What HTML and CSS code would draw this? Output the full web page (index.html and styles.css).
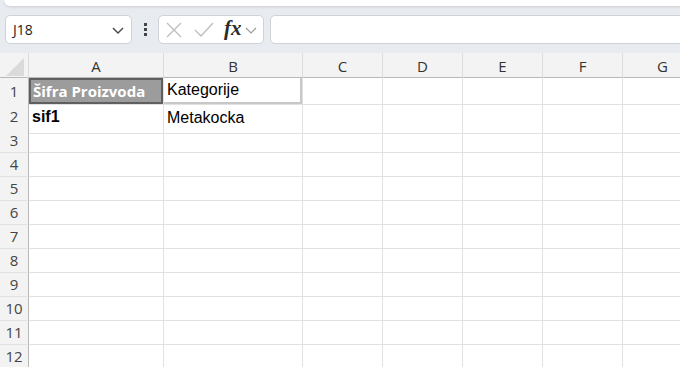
FILE: index.html
```html
<!DOCTYPE html>
<html lang="hr">
<head>
  <meta charset="UTF-8">
  <title>Radna knjiga</title>
  <link rel="stylesheet" href="styles.css">
</head>
<body>

<div class="ribbon-edge"></div>

<!-- traka s formulom -->
<div class="formula-row">
  <div class="name-box">
    <span>J18</span>
    <svg width="14" height="10" viewBox="0 0 14 10"><path d="M2 3 L7 8 L12 3" fill="none" stroke="#444" stroke-width="1.4"/></svg>
  </div>
  <div class="dots"><i></i><i></i><i></i></div>
  <div class="fx-box">
    <svg width="18" height="18" viewBox="0 0 18 18"><path d="M2 2 L16 16 M16 2 L2 16" stroke="#bdbdbd" stroke-width="1.3"/></svg>
    <svg width="22" height="18" viewBox="0 0 22 18"><path d="M2 9 L8 15 L20 2" fill="none" stroke="#bdbdbd" stroke-width="1.3"/></svg>
    <span class="fx">fx</span>
    <svg width="12" height="8" viewBox="0 0 12 8"><path d="M1 2 L6 7 L11 2" fill="none" stroke="#999" stroke-width="1.1"/></svg>
  </div>
  <div class="formula-input"></div>
</div>

<!-- tablica -->
<div class="sheet">
  <div class="row head">
    <div class="corner"><span></span></div>
    <div class="col">A</div><div class="col">B</div><div class="col">C</div><div class="col">D</div>
    <div class="col">E</div><div class="col">F</div><div class="col">G</div><div class="col"></div>
  </div>
  <div class="row r1">
    <div class="num">1</div>
    <div class="cell"><div class="title-cell">Šifra Proizvoda</div></div>
    <div class="cell"><div class="cat-cell">Kategorije</div></div>
    <div class="cell"></div><div class="cell"></div><div class="cell"></div><div class="cell"></div><div class="cell"></div><div class="cell"></div>
  </div>
  <div class="row r2">
    <div class="num">2</div>
    <div class="cell bold">sif1</div>
    <div class="cell plain">Metakocka</div>
    <div class="cell"></div><div class="cell"></div><div class="cell"></div><div class="cell"></div><div class="cell"></div><div class="cell"></div>
  </div>
  <div class="row"><div class="num">3</div><div class="cell"></div><div class="cell"></div><div class="cell"></div><div class="cell"></div><div class="cell"></div><div class="cell"></div><div class="cell"></div><div class="cell"></div></div>
  <div class="row"><div class="num">4</div><div class="cell"></div><div class="cell"></div><div class="cell"></div><div class="cell"></div><div class="cell"></div><div class="cell"></div><div class="cell"></div><div class="cell"></div></div>
  <div class="row"><div class="num">5</div><div class="cell"></div><div class="cell"></div><div class="cell"></div><div class="cell"></div><div class="cell"></div><div class="cell"></div><div class="cell"></div><div class="cell"></div></div>
  <div class="row"><div class="num">6</div><div class="cell"></div><div class="cell"></div><div class="cell"></div><div class="cell"></div><div class="cell"></div><div class="cell"></div><div class="cell"></div><div class="cell"></div></div>
  <div class="row"><div class="num">7</div><div class="cell"></div><div class="cell"></div><div class="cell"></div><div class="cell"></div><div class="cell"></div><div class="cell"></div><div class="cell"></div><div class="cell"></div></div>
  <div class="row"><div class="num">8</div><div class="cell"></div><div class="cell"></div><div class="cell"></div><div class="cell"></div><div class="cell"></div><div class="cell"></div><div class="cell"></div><div class="cell"></div></div>
  <div class="row"><div class="num">9</div><div class="cell"></div><div class="cell"></div><div class="cell"></div><div class="cell"></div><div class="cell"></div><div class="cell"></div><div class="cell"></div><div class="cell"></div></div>
  <div class="row"><div class="num">10</div><div class="cell"></div><div class="cell"></div><div class="cell"></div><div class="cell"></div><div class="cell"></div><div class="cell"></div><div class="cell"></div><div class="cell"></div></div>
  <div class="row"><div class="num">11</div><div class="cell"></div><div class="cell"></div><div class="cell"></div><div class="cell"></div><div class="cell"></div><div class="cell"></div><div class="cell"></div><div class="cell"></div></div>
  <div class="row"><div class="num">12</div><div class="cell"></div><div class="cell"></div><div class="cell"></div><div class="cell"></div><div class="cell"></div><div class="cell"></div><div class="cell"></div><div class="cell"></div></div>
</div>

</body>
</html>
```

FILE: styles.css
```css
* { box-sizing: border-box; }
body {
  margin: 0;
  width: 680px;
  height: 367px;
  overflow: hidden;
  font-family: "Open Sans", "Noto Sans", Arial, sans-serif;
  background-color: #e8ebef;
}
.ribbon-edge {
  height: 6px;
  margin-left: 4px;
  margin-right: -20px;
  background: white;
  border-radius: 0 0 0 8px;
  box-shadow: 0 1px 3px rgba(0, 0, 0, 0.12);
}
.formula-row {
  display: flex;
  align-items: center;
  height: 47px;
  padding: 0 0 0 5px;
}
.name-box {
  width: 127px;
  height: 29px;
  background: white;
  border: 1px solid #cfd2d6;
  border-radius: 5px;
  display: flex;
  align-items: center;
  justify-content: space-between;
  padding: 0 6px 0 7px;
  font-size: 14px;
  color: #222;
}
.dots {
  width: 26px;
  display: flex;
  flex-direction: column;
  align-items: center;
  gap: 2px;
}
.dots i {
  width: 3px;
  height: 3px;
  background: #444;
}
.fx-box {
  width: 106px;
  height: 29px;
  background: white;
  border: 1px solid #cfd2d6;
  border-radius: 5px;
  display: flex;
  align-items: center;
  padding: 0 0 0 6px;
}
.fx-box svg:nth-child(2) { margin-left: 10px; }
.fx {
  font-family: "Liberation Serif", "DejaVu Serif", serif;
  font-style: italic;
  font-weight: bold;
  font-size: 21px;
  color: #2b2b2b;
  margin-left: 9px;
  margin-right: 3px;
  margin-top: -3px;
}
.formula-input {
  flex: 1;
  height: 29px;
  margin-left: 6px;
  margin-right: -10px;
  background: white;
  border: 1px solid #cfd2d6;
  border-radius: 5px;
}
.sheet {
  background: white;
}
.row {
  display: grid;
  grid-template-columns: 29px 135px 139px 80px 80px 80px 80px 80px;
  height: 24px;
}
.row.r1 { height: 25px; }
.row.r2 { height: 26px; }
.head {
  background: #f3f3f3;
  height: 25px;
  border-bottom: 1px solid #b8b8b8;
}
.corner {
  border-right: 1px solid #dcdcdc;
  display: flex;
  align-items: flex-end;
  justify-content: flex-end;
  padding: 0 4px 3px 0;
}
.corner span {
  width: 0;
  height: 0;
  border-left: 18px solid transparent;
  border-bottom: 18px solid #dadada;
}
.col {
  border-right: 1px solid #dcdcdc;
  text-align: center;
  font-size: 15px;
  line-height: 26px;
  color: #333;
}
.num {
  background: #f3f3f3;
  border-right: 1px solid #b8b8b8;
  border-bottom: 1px solid #e1e1e1;
  text-align: center;
  font-size: 15px;
  line-height: 23px;
  color: #444;
}
.r1 .num { line-height: 26px; }
.r2 .num { line-height: 26px; }
.cell {
  border-right: 1px solid #e1e1e1;
  border-bottom: 1px solid #e1e1e1;
  font-family: "Liberation Sans", Arial, sans-serif;
  color: #000;
  padding-left: 3px;
  white-space: nowrap;
}
.r1 .cell:nth-child(2),
.r1 .cell:nth-child(3) { padding: 0; }
.title-cell {
  height: 26px;
  background: #9c9c9c;
  border: 2px solid #5f5f5f;
  color: white;
  font-family: "Open Sans", "Noto Sans", sans-serif;
  font-weight: bold;
  font-size: 15px;
  line-height: 22px;
  padding-left: 2px;
}
.cat-cell {
  height: 26px;
  border-right: 2px solid #c8c8c8;
  border-bottom: 2px solid #c8c8c8;
  font-size: 16px;
  line-height: 23px;
  padding-left: 3px;
}
.bold {
  font-weight: bold;
  font-size: 16px;
  line-height: 28px;
}
.plain {
  font-size: 16px;
  line-height: 30px;
}
```
